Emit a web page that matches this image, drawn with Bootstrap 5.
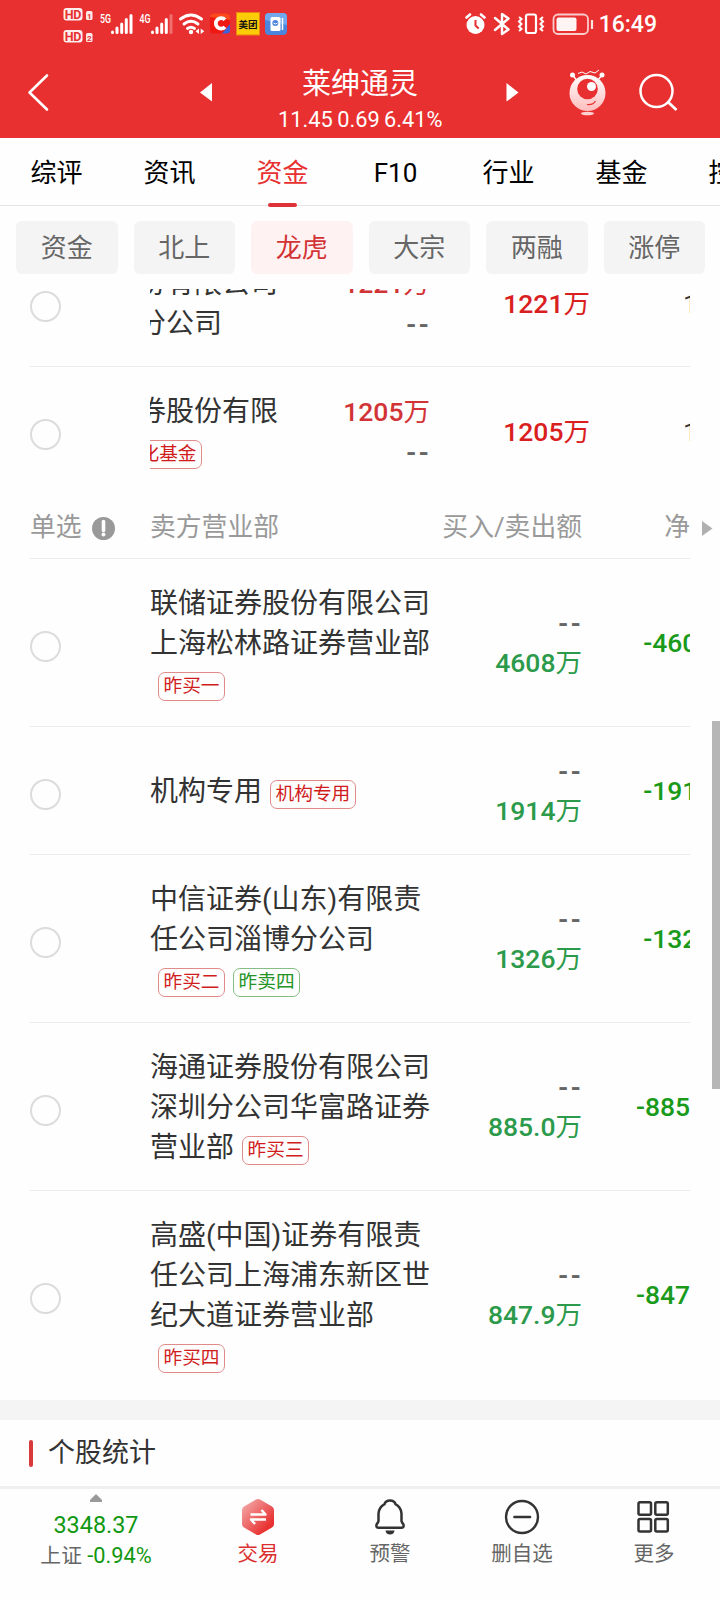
<!DOCTYPE html>
<html lang="zh-CN">
<head>
<meta charset="utf-8">
<meta name="viewport" content="width=device-width, initial-scale=1">
<title>莱绅通灵 - 龙虎</title>
<link href="https://cdn.jsdelivr.net/npm/bootstrap@5.3.0/dist/css/bootstrap.min.css" rel="stylesheet">
<style>
:root{--brand:#e83030;--up:#d9201f;--down:#1a9a1a}
body{font-family:Roboto,"Noto Sans CJK SC",sans-serif;font-weight:400;color:#333;background:#fefefe;line-height:1}
.phone{width:720px;height:1600px;overflow:hidden}
svg{display:block;flex:none}
.topbar{background:var(--brand);height:138px;color:#fff}
.statusbar{height:48px}
.sb-left{padding-left:63px}
.titlebar{height:90px}
.stock-name{font-size:29px;line-height:34px}
.quote-line{font-size:21.8px;line-height:26px;word-spacing:-1px;padding-top:6px}
.clock{font-size:23px;font-weight:500;line-height:50px}
.tabs-row{height:68px;border-bottom:1px solid #e5e5e5}
.tab-item{width:113px;flex:none;font-size:26px;line-height:71px;height:68px;color:#000;text-align:center;position:relative}
.tab-item.on{color:var(--brand)}
.tab-item.on::after{content:"";position:absolute;left:42px;bottom:-1px;width:29px;height:4px;border-radius:2px;background:#dd3237}
.chips{padding:15px 15px 15px 16px;gap:16px}
.chip{flex:1 1 0;height:53px;line-height:55px;border-radius:6px;background:#f4f4f4;color:#666;font-size:26px;text-align:center}
.chip.on{background:#fff2f2;color:#d23336}
.pane{height:269px;margin-left:30px;width:690px;overflow:hidden}
.first-row{margin-top:-50px}
.entry{width:660px;height:168px;border-bottom:1px solid #ebebeb;overflow:hidden}
.entry.short{height:128px}
.entry.tall{height:209px;border:0;padding-bottom:2px}
.pick{width:31px;height:31px;border:2px solid #dcdcdc;border-radius:50%;margin-top:8px;margin-right:89px;flex:none}
.branch{width:281px;font-size:28px;line-height:40px;flex:none;padding-top:2px}
.cut{overflow:hidden}
.cut>div{margin-left:-12px;white-space:nowrap}
.tagline{display:inline-block;height:29px;line-height:26px;border:1px solid #e08a8a;border-radius:7px;padding:0 4.5px;margin-left:8px;font-size:18.7px;color:#d01c1c;vertical-align:1px;margin-bottom:-2px}
.tagline.sell{border-color:#86bd86;color:#249424}
.sum{width:151px;flex:none;text-align:right;font-size:26.5px;line-height:39px;font-weight:500;color:#2c9a4b;white-space:nowrap}
.sum .none{color:#666;letter-spacing:2px;margin-right:-1px;font-weight:700}
.upper .sum{width:141px}
.upper .none{padding-top:2px}
.net{flex:none;width:157px;text-align:right;font-size:26.5px;line-height:40px;font-weight:500;color:var(--down);white-space:nowrap}
.upper .net{width:160px}
.u{font-weight:400}
.sub-head{height:63px;width:690px;font-size:25.8px;color:#999}
.sub-head>span{line-height:64px}
.gap-band{height:20px;background:#f4f4f4}
.section-title{height:66px;font-size:27px;padding-left:29px;gap:15px}
.section-title i{width:4px;height:27px;border-radius:2px;background:#d83a3c}
.bottombar{height:114px;border-top:3px solid #f0f0f0;font-size:20.5px;color:#666}
.idx{width:192px;padding-top:5px}
.act{width:132px;padding-top:9px}
.act span{line-height:26px;margin-top:5px}
.scroll-thumb{position:absolute;left:712px;top:721px;width:8px;height:368px;background:#b6b6b6}
</style>
</head>
<body>
<div class="phone position-relative">
<header class="topbar">
 <div class="statusbar d-flex justify-content-between">
  <div class="sb-left">
   <svg width="226" height="48" viewBox="63 0 226 48" fill="#fff">
    <rect x="63.500" y="8" width="19" height="12.500" rx="3" opacity=".92"/><rect x="63.500" y="30" width="19" height="12.500" rx="3" opacity=".92"/>
    <g font-family="Roboto" font-weight="700" font-size="12.500" fill="#e83030"><text x="64.800" y="18.700" textLength="16.500">HD</text><text x="64.800" y="40.700" textLength="16.500">HD</text></g>
    <rect x="86" y="11" width="6.500" height="9" rx="1.500" opacity=".9"/><rect x="86" y="33" width="6.500" height="9" rx="1.500" opacity=".9"/>
    <g font-family="Roboto" font-weight="700" font-size="8" fill="#e83030"><text x="87" y="18.500">1</text><text x="87" y="40.500">2</text></g>
    <g font-family="Roboto" font-weight="500" font-size="12.500"><text x="100" y="23" textLength="11" lengthAdjust="spacingAndGlyphs">5G</text><text x="139.500" y="23" textLength="11" lengthAdjust="spacingAndGlyphs">4G</text></g>
    <g stroke="#fff" stroke-width="3" stroke-linecap="round"><path d="M112.500 32v.5M117 28v4.500M121.700 24v8.500M126.300 19.500v13M131 15.500v17M152.500 32v.5M157 28v4.500M161.700 24v8.500M166.300 19.500v13"/><path d="M171 15.500v17" opacity=".3"/></g>
    <g fill="none" stroke="#fff" stroke-width="2.900" stroke-linecap="round"><path d="M180.500 19q10.500-8 21 0M184 24q7-5.500 14 0M187.500 28.500q3.500-2.500 7 0"/></g><circle cx="191" cy="32" r="2.200"/><path d="M199 28.500v5.500l-3.500-2.700zM200.700 28.500v5.500l3.500-2.700z"/>
    <rect x="210" y="13.500" width="20" height="20" rx="3" fill="#f01812"/><path d="M210 17q0-3.500 3.500-3.500h13q3.500 0 3.500 3.500v3z" fill="#fb4b1c"/>
    <path d="M230 24v6q0 3.500-3.500 3.500H222z" fill="#3c62dc"/><path d="M225 19.800a5.300 5.300 0 1 0 0 7.200" fill="none" stroke="#fff" stroke-width="3.800"/>
    <rect x="236.500" y="12.500" width="23" height="22.500" fill="#fccc07" stroke="#e98510"/><text x="238.500" y="27.500" font-family="Noto Sans CJK SC" font-weight="700" font-size="9.500" fill="#111">美团</text>
    <rect x="265" y="13" width="22" height="22" rx="4" fill="#4b86dc"/><path d="M265 20v-3q0-4 4-4h14q4 0 4 4v8z" fill="#72a8ed"/><rect x="270.500" y="17" width="10" height="14" rx="1.500"/><path d="M282.500 18v12" stroke="#fff" stroke-width="1.500"/><circle cx="275.300" cy="23" r="3" fill="#4b86dc"/><path d="M273.500 23q2 2 4 0" stroke="#fff" fill="none"/>
   </svg>
  </div>
  <div class="d-flex justify-content-between" style="width:192px;margin-right:63px">
   <svg width="130" height="48" viewBox="465 0 130 48" fill="#fff">
    <circle cx="475.500" cy="25" r="9"/><path d="M475.500 20v5.500l3.200 3" fill="none" stroke="#e83030" stroke-width="2"/><path d="M466.500 17.500l3.500-3M484.500 17.500l-3.500-3" stroke="#fff" stroke-width="2.600" stroke-linecap="round"/>
    <path d="M495 18l13.500 11.500-6.500 4.500V14l6.500 4.500L495 30" fill="none" stroke="#fff" stroke-width="2.400" stroke-linecap="round" stroke-linejoin="round"/>
    <rect x="526" y="14.500" width="10" height="18.500" rx="2" fill="none" stroke="#fff" stroke-width="2.200"/>
    <path d="M519 17l2.500 2-2.500 2.500 2.500 2.500-2.500 2.500 2.500 2.500-2.500 2M543 17l-2.500 2 2.500 2.500-2.500 2.500 2.500 2.500-2.500 2.500 2.500 2" fill="none" stroke="#fff" stroke-width="2"/>
    <rect x="553.500" y="14.500" width="34.500" height="19.500" rx="4.500" fill="none" stroke="#fff" stroke-width="1.800" opacity=".75"/><rect x="556.500" y="17.500" width="20" height="13.500" rx="2" opacity=".95"/><path d="M592 20v9" stroke="#fff" stroke-width="2.200" opacity=".85"/>
   </svg>
   <span class="clock">16:49</span>
  </div>
 </div>
 <div class="titlebar d-flex">
  <svg width="278" height="90" viewBox="0 48 278 90"><path d="M47 75.500L29.500 92.500 47 109.500" fill="none" stroke="#fff" stroke-width="2.600" stroke-linecap="round" stroke-linejoin="round"/><path d="M212 83v18.500L200 92.500z" fill="#fff"/></svg>
  <div class="text-center text-nowrap" style="width:164px;padding-top:19px"><div class="stock-name">莱绅通灵</div><div class="quote-line">11.45 0.69 6.41%</div></div>
  <svg width="278" height="90" viewBox="442 48 278 90">
   <defs><linearGradient id="bot" x2="0" y2="1"><stop stop-color="#fff"/><stop offset="1" stop-color="#ffbcbc"/></linearGradient></defs>
   <path d="M506.500 83v18.500l12-9z" fill="#fff"/>
   <path d="M572.500 75l4 5M602 75l-4 5" stroke="#fff" stroke-width="1.300"/><circle cx="572.500" cy="75" r="2.500" fill="#fff"/><circle cx="602" cy="75" r="2.500" fill="#fff"/>
   <path d="M578 73.500l4-1.500 4 2 4-2.500 5 1.500 4-3" fill="none" stroke="#fff" stroke-width="1"/>
   <circle cx="587.500" cy="93" r="18" fill="url(#bot)"/><circle cx="587.500" cy="89" r="10.300" fill="#e83030"/><circle cx="591.500" cy="86.500" r="4.500" fill="#fff"/><path d="M587 104.500q6 .8 8.500-3.500" fill="none" stroke="#e83030" stroke-width="1.200"/><ellipse cx="587.500" cy="113.500" rx="6.500" ry="1.800" fill="#ffd0d0"/>
   <circle cx="656.500" cy="91" r="16" fill="none" stroke="#fff" stroke-width="2.500"/><path d="M668 102l8.500 8" stroke="#fff" stroke-width="2.800"/>
  </svg>
 </div>
</header>
<nav class="tabs-row d-flex">
 <div class="tab-item">综评</div><div class="tab-item">资讯</div><div class="tab-item on">资金</div><div class="tab-item">F10</div><div class="tab-item">行业</div><div class="tab-item">基金</div><div class="tab-item">控盘</div>
</nav>
<div class="chips d-flex">
 <div class="chip">资金</div><div class="chip">北上</div><div class="chip on">龙虎</div><div class="chip">大宗</div><div class="chip">两融</div><div class="chip">涨停</div>
</div>
<main>
 <section class="pane upper">
  <div class="entry short first-row d-flex"><div class="pick" style="margin-top:52px"></div>
   <div class="branch cut" style="width:139px;padding-top:25px"><div>份有限公司<br>分公司</div></div>
   <div class="sum" style="color:#d23336;padding-top:25px">1221<span class="u">万</span><div class="none">--</div></div>
   <div class="net" style="color:var(--up);padding-top:45px">1221<span class="u">万</span></div>
   <div style="padding:52px 0 0 93px;font-size:26.5px">1</div></div>
  <div class="entry short border-0 d-flex"><div class="pick" style="margin-top:52px"></div>
   <div class="branch cut" style="width:139px;padding-top:25px"><div>券股份有限<br><span class="tagline" style="margin-left:-3px">化基金</span></div></div>
   <div class="sum" style="color:#d23336;padding-top:25px">1205<span class="u">万</span><div class="none">--</div></div>
   <div class="net" style="color:var(--up);padding-top:45px">1205<span class="u">万</span></div>
   <div style="padding:52px 0 0 93px;font-size:26.5px">1</div></div>
  <div class="sub-head d-flex"><span style="width:62px">单选</span>
   <svg class="align-self-center mt-1" width="23" height="23" viewBox="0 0 23 23"><circle cx="11.500" cy="11.500" r="11.500" fill="#999"/><path d="M11.500 4.500v9" stroke="#fff" stroke-width="3.600" stroke-linecap="round"/><circle cx="11.500" cy="17.500" r="2" fill="#fff"/></svg>
   <span style="width:287px;margin-left:35px">卖方营业部</span><span class="text-end" style="width:145px">买入/卖出额</span><span class="text-end" style="width:108px">净</span>
   <svg class="align-self-center mt-1" style="margin-left:12px" width="11" height="17" viewBox="0 0 11 17"><path d="M0 1l10.500 7.500L0 16z" fill="#b0b0b0"/></svg></div>
 </section>
 <section style="margin-left:30px;border-top:1px solid #ebebeb;width:660px">
  <div class="entry d-flex align-items-center"><div class="pick"></div><div class="branch">联储证券股份有限公司上海松林路证券营业部<br><span class="tagline">昨买一</span></div><div class="sum"><div class="none">--</div>4608<span class="u">万</span></div><div class="net">-4608<span class="u">万</span></div></div>
  <div class="entry short d-flex align-items-center"><div class="pick"></div><div class="branch">机构专用<span class="tagline">机构专用</span></div><div class="sum"><div class="none">--</div>1914<span class="u">万</span></div><div class="net">-1914<span class="u">万</span></div></div>
  <div class="entry d-flex align-items-center"><div class="pick"></div><div class="branch">中信证券(山东)有限责<br>任公司淄博分公司<br><span class="tagline">昨买二</span><span class="tagline sell">昨卖四</span></div><div class="sum"><div class="none">--</div>1326<span class="u">万</span></div><div class="net">-1326<span class="u">万</span></div></div>
  <div class="entry d-flex align-items-center"><div class="pick"></div><div class="branch">海通证券股份有限公司深圳分公司华富路证券营业部<span class="tagline">昨买三</span></div><div class="sum"><div class="none">--</div>885.0<span class="u">万</span></div><div class="net">-885.0<span class="u">万</span></div></div>
  <div class="entry tall d-flex align-items-center"><div class="pick"></div><div class="branch">高盛(中国)证券有限责<br>任公司上海浦东新区世纪大道证券营业部<br><span class="tagline">昨买四</span></div><div class="sum"><div class="none">--</div>847.9<span class="u">万</span></div><div class="net">-847.9<span class="u">万</span></div></div>
 </section>
 <div class="gap-band"></div>
 <div class="section-title d-flex align-items-center"><i></i><span>个股统计</span></div>
</main>
<footer class="bottombar d-flex">
 <div class="idx d-flex flex-column align-items-center" style="color:#119811">
  <svg width="12" height="8" viewBox="0 0 12 8"><path d="M6 0l6 6v2H0V6z" fill="#999"/></svg>
  <div style="font-size:23.4px;line-height:28px;margin-top:9px">3348.37</div>
  <div class="text-nowrap" style="font-size:20.8px;line-height:26px;margin-top:4px"><span style="color:#666">上证</span> <span style="font-size:21.8px">-0.94%</span></div>
 </div>
 <div class="act d-flex flex-column align-items-center" style="color:#dc3030">
  <svg width="34" height="38" viewBox="0 0 34 38"><defs><linearGradient id="hx" x2="1" y2="1"><stop offset=".1" stop-color="#f3a3a3"/><stop offset=".8" stop-color="#e83030"/></linearGradient></defs><path d="M15 1.500q2-1 4 0l12 7q2 1 2 3.500v14q0 2.500-2 3.500l-12 7q-2 1-4 0l-12-7q-2-1-2-3.500V12q0-2.500 2-3.500z" fill="url(#hx)"/><path d="M9.500 16.500h15l-4-4.500M25 21.500H10l4 4.500" fill="none" stroke="#fff" stroke-width="2.500" stroke-linejoin="round"/></svg>
  <span>交易</span></div>
 <div class="act d-flex flex-column align-items-center">
  <svg width="34" height="38" viewBox="0 0 34 38"><path d="M17 2.500q4.500 0 5.500 3.700 5.500 3 6 9.300v7.500q.4 1.700 1.700 3 1.500 3.700-2.200 3.700H6q-3.700 0-2.200-3.700 1.300-1.300 1.700-3v-7.500q.5-6.300 6-9.300Q12.500 2.500 17 2.500z" fill="none" stroke="#333" stroke-width="2.500"/><path d="M12.500 32.500h9q-.5 4-4.500 4t-4.500-4z" fill="#333"/></svg>
  <span>预警</span></div>
 <div class="act d-flex flex-column align-items-center">
  <svg width="36" height="38" viewBox="0 0 36 38"><circle cx="18" cy="19" r="16" fill="none" stroke="#333" stroke-width="2.400"/><path d="M10.500 19h15.500" stroke="#333" stroke-width="2.700" stroke-linecap="round"/></svg>
  <span>删自选</span></div>
 <div class="act d-flex flex-column align-items-center">
  <svg width="34" height="38" viewBox="0 0 34 38" fill="none" stroke="#333" stroke-width="2.500"><rect x="1.500" y="4.200" width="12.500" height="12.500" rx="1.500"/><rect x="18.300" y="4.200" width="12.500" height="12.500" rx="1.500"/><rect x="1.500" y="21" width="12.500" height="12.500" rx="1.500"/><rect x="18.300" y="21" width="12.500" height="12.500" rx="1.500"/></svg>
  <span>更多</span></div>
</footer>
<div class="scroll-thumb"></div>
</div>
<script src="https://cdn.jsdelivr.net/npm/bootstrap@5.3.0/dist/js/bootstrap.bundle.min.js"></script>
</body>
</html>
